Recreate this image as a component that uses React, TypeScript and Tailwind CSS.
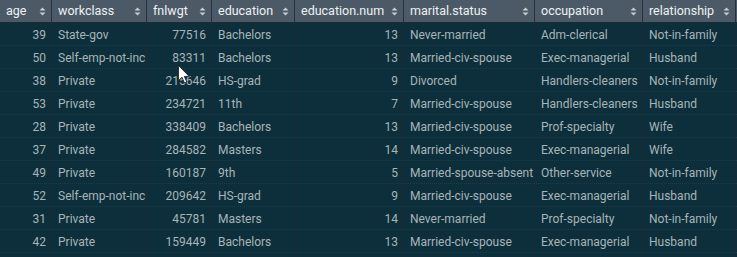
import React from 'react'

// Column layout of the data viewer (widths in px, read off the screenshot)
const columns = [
    { key: 'age', label: 'age', width: 52, numeric: true },
    { key: 'workclass', label: 'workclass', width: 95, numeric: false },
    { key: 'fnlwgt', label: 'fnlwgt', width: 65, numeric: true },
    { key: 'education', label: 'education', width: 83, numeric: false },
    { key: 'educationNum', label: 'education.num', width: 109, numeric: true },
    { key: 'marital', label: 'marital.status', width: 131, numeric: false },
    { key: 'occupation', label: 'occupation', width: 108, numeric: false },
    { key: 'relationship', label: 'relationship', width: 93, numeric: false },
]

type Row = (string | number)[]

const rows: Row[] = [
    [39, 'State-gov', 77516, 'Bachelors', 13, 'Never-married', 'Adm-clerical', 'Not-in-family'],
    [50, 'Self-emp-not-inc', 83311, 'Bachelors', 13, 'Married-civ-spouse', 'Exec-managerial', 'Husband'],
    [38, 'Private', 215646, 'HS-grad', 9, 'Divorced', 'Handlers-cleaners', 'Not-in-family'],
    [53, 'Private', 234721, '11th', 7, 'Married-civ-spouse', 'Handlers-cleaners', 'Husband'],
    [28, 'Private', 338409, 'Bachelors', 13, 'Married-civ-spouse', 'Prof-specialty', 'Wife'],
    [37, 'Private', 284582, 'Masters', 14, 'Married-civ-spouse', 'Exec-managerial', 'Wife'],
    [49, 'Private', 160187, '9th', 5, 'Married-spouse-absent', 'Other-service', 'Not-in-family'],
    [52, 'Self-emp-not-inc', 209642, 'HS-grad', 9, 'Married-civ-spouse', 'Exec-managerial', 'Husband'],
    [31, 'Private', 45781, 'Masters', 14, 'Never-married', 'Prof-specialty', 'Not-in-family'],
    [42, 'Private', 159449, 'Bachelors', 13, 'Married-civ-spouse', 'Exec-managerial', 'Husband'],
    // next row is scrolled below the fold; only its top edge shows
    ['', '', '', '', '', '', '', ''],
]

function SortIcon() {
    return (
        <svg width="7" height="11" viewBox="0 0 7 11" className="shrink-0">
            <path d="M3.5 1.5 L6.5 4.5 L0.5 4.5 Z" fill="#c3cbd0" />
            <path d="M3.5 9.5 L6.5 6.5 L0.5 6.5 Z" fill="#c3cbd0" />
        </svg>
    )
}

function Cursor() {
    return (
        <svg width="13" height="19" viewBox="0 0 13 19" className="absolute left-[178px] top-[65px] pointer-events-none">
            <path
                d="M0.5 0.5 L0.5 15.5 L4 12.2 L6.6 18 L8.8 17 L6.3 11.4 L11.2 11.4 Z"
                fill="#ffffff"
                stroke="#1a1a1a"
                strokeWidth="0.8"
                strokeLinejoin="round"
            />
        </svg>
    )
}

export default function App() {
    return (
        <div
            className="relative w-[737px] h-[257px] overflow-hidden bg-[#0c2f3b] text-[12px]"
            style={{ fontFamily: 'Roboto, "Liberation Sans", sans-serif' }}
        >
            {/* Header */}
            <div className="flex h-[23px] bg-[#4b5a66] border-b border-[#1d2a32]">
                {columns.map((c) => (
                    <div
                        key={c.key}
                        style={{ width: c.width }}
                        className="shrink-0 flex items-center justify-between pt-[1px] pl-[6px] pr-[5px] border-r border-[#26323b] text-[12.5px] text-[#eef1f3]"
                    >
                        <span className="whitespace-nowrap">{c.label}</span>
                        <SortIcon />
                    </div>
                ))}
                <div className="flex-1" />
            </div>

            {/* Body */}
            {rows.map((r, i) => (
                <div
                    key={i}
                    className="flex h-[23px] border-b border-dotted border-[#1e3c47]"
                >
                    {columns.map((c, j) => (
                        <div
                            key={c.key}
                            style={{ width: c.width }}
                            className={
                                'shrink-0 flex items-center pt-[2px] border-r border-[#1b2a33] text-[12px] text-[#a9b4b9] whitespace-nowrap ' +
                                (c.numeric ? 'justify-end pr-[5px]' : 'justify-start pl-[6px]')
                            }
                        >
                            {r[j]}
                        </div>
                    ))}
                    <div className="flex-1" />
                </div>
            ))}

            <Cursor />
        </div>
    )
}
